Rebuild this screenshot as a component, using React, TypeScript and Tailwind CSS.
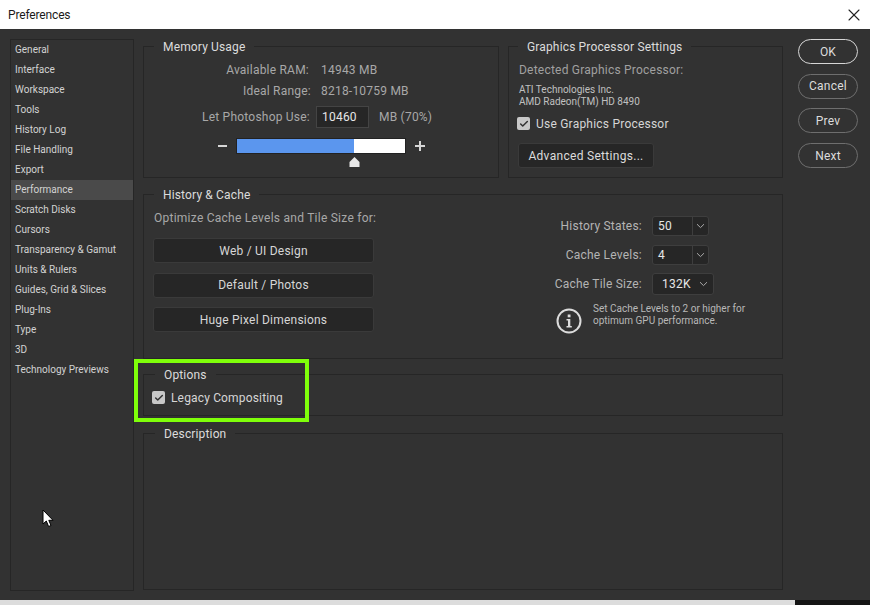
import {Check, X} from "lucide-react";

const navItems = [
    "General", "Interface", "Workspace", "Tools", "History Log", "File Handling", "Export", "Performance",
    "Scratch Disks", "Cursors", "Transparency & Gamut", "Units & Rulers", "Guides, Grid & Slices", "Plug-Ins",
    "Type", "3D", "Technology Previews"
];

function Panel({title, titleClass = "ml-[10px]", className, children}: {title: string; titleClass?: string; className: string; children?: React.ReactNode}) {
    return (
        <section className={`border border-[#262626] ${className}`}>
            <h2 className={`relative -top-[8px] w-fit bg-[#323232] px-[9px] text-[12px] leading-[17px] font-normal tracking-[0.15px] text-[#dcdcdc] ${titleClass}`}>
                {title}
            </h2>
            {children}
        </section>
    );
}

function Checkbox() {
    return (
        <span className="flex size-[13px] items-center justify-center rounded-[2px] bg-[#c8c8c8]">
            <Check className="size-[10px] text-[#323232]" strokeWidth={3.5}/>
        </span>
    );
}

function DarkButton({label}: {label: string}) {
    return (
        <div className="flex h-[25px] w-[221px] items-center justify-center rounded-[3px] border border-[#3a3a3a] bg-[#262626] text-[12px] tracking-[0.22px] text-[#d6d6d6]">
            {label}
        </div>
    );
}

function Chevron() {
    return (
        <svg width="9" height="6" viewBox="0 0 9 6" className="text-[#aaaaaa]">
            <path d="M1 1.2 L4.5 4.6 L8 1.2" fill="none" stroke="currentColor" strokeWidth="1"/>
        </svg>
    );
}

function NumberSelect({label, value}: {label: string; value: string}) {
    return (
        <div className="flex h-[20px] items-center justify-end">
            <span className="mr-[10px] text-[12px] tracking-[0.22px] whitespace-nowrap text-[#b4b4b4]">{label}</span>
            <div className="flex h-[20px] w-[57px] rounded-[3px] border border-[#3e3e3e] bg-[#262626] text-[12px] text-[#e6e6e6]">
                <span className="flex-1 border-r border-[#3e3e3e] pl-[5px] leading-[18px] tracking-[0.22px]">{value}</span>
                <span className="flex w-[15px] items-center justify-center"><Chevron/></span>
            </div>
        </div>
    );
}

function SideButton({label, primary}: {label: string; primary?: boolean}) {
    return (
        <div
            className={`flex h-[25px] w-[60px] items-center justify-center rounded-[13px] border text-[12px] tracking-[0.22px] text-[#dcdcdc] ${
                primary ? "border-[#d6d6d6]" : "border-[#6e6e6e]"
            }`}
        >
            {label}
        </div>
    );
}

export default function App() {
    return (
        <div className="relative flex h-[605px] w-[870px] flex-col overflow-hidden bg-[#323232] font-['Roboto',sans-serif]">
            <header className="flex h-[29px] shrink-0 items-center justify-between bg-white pr-[6px] pl-[8px]">
                <span className="text-[12px] tracking-[-0.15px] text-[#1a1a1a]">Preferences</span>
                <X className="size-[20px] text-[#222222]" strokeWidth={1.3}/>
            </header>

            <div className="flex h-[571px] shrink-0 pt-[10px] pl-[10px]">
                <nav className="h-[552px] w-[124px] border border-[#262626]">
                    {navItems.map((item) => (
                        <div
                            key={item}
                            className={`flex h-[20px] items-center pb-[2px] pl-[4px] text-[10px] text-[#d2d2d2] ${
                                item === "Performance" ? "bg-[#4a4a4a]" : ""
                            }`}
                        >
                            {item}
                        </div>
                    ))}
                </nav>

                <main className="ml-[9px] flex w-[640px] flex-col pt-[7px]">
                    <div className="flex h-[132px] justify-between">
                        <Panel title="Memory Usage" className="w-[356px]">
                            <div className="-mt-[5px] text-[12px] tracking-[0.22px] text-[#a8a8a8]">
                                <div className="flex h-[21px] items-center">
                                    <span className="w-[165px] text-right">Available RAM:</span>
                                    <span className="ml-[12px]">14943 MB</span>
                                </div>
                                <div className="flex h-[21px] items-center">
                                    <span className="w-[167px] text-right">Ideal Range:</span>
                                    <span className="ml-[10px]">8218-10759 MB</span>
                                </div>
                                <div className="mt-[5px] flex h-[22px] items-center">
                                    <span className="w-[166px] text-right">Let Photoshop Use:</span>
                                    <span className="ml-[6px] flex h-[22px] w-[53px] items-center border border-[#444444] bg-[#262626] pl-[5px] text-[#e6e6e6]">10460</span>
                                    <span className="ml-[10px]">MB (70%)</span>
                                </div>
                                <div className="mt-[10px] flex h-[16px] items-center">
                                    <span className="mr-[9px] ml-[74px] h-[2px] w-[9px] bg-[#d6d6d6]"/>
                                    <div className="relative flex h-[16px] w-[170px] border border-[#222222] bg-white">
                                        <div className="h-full w-[117px] bg-[#5b96ee]"/>
                                        <svg width="11" height="10" viewBox="0 0 11 10" className="absolute top-[18px] left-[112px] text-[#e8e8e8]">
                                            <path d="M5.5 0 L10.5 5 V10 H0.5 V5 Z" fill="currentColor"/>
                                        </svg>
                                    </div>
                                    <svg width="10" height="10" viewBox="0 0 10 10" className="ml-[9px] text-[#d6d6d6]">
                                        <path d="M0 5 H10 M5 0 V10" stroke="currentColor" strokeWidth="2"/>
                                    </svg>
                                </div>
                            </div>
                        </Panel>
                        <Panel title="Graphics Processor Settings" titleClass="ml-[9px]" className="w-[275px]">
                            <div className="-mt-[5px] pl-[10px]">
                                <div className="flex h-[21px] items-center text-[12px] tracking-[0.22px] text-[#a0a0a0]">Detected Graphics Processor:</div>
                                <div className="mt-[4px] text-[10px] leading-[12px] text-[#c0c0c0]">
                                    <div>ATI Technologies Inc.</div>
                                    <div>AMD Radeon(TM) HD 8490</div>
                                </div>
                                <div className="mt-[7px] -ml-[2px] flex h-[17px] items-center gap-[6px] text-[12px] tracking-[0.22px] text-[#d6d6d6]">
                                    <Checkbox/>
                                    Use Graphics Processor
                                </div>
                                <div className="mt-[11px] -ml-px flex h-[25px] w-[136px] items-center justify-center rounded-[3px] border border-[#3a3a3a] bg-[#262626] text-[12px] tracking-[0.3px] text-[#dcdcdc]">
                                    Advanced Settings...
                                </div>
                            </div>
                        </Panel>
                    </div>

                    <Panel title="History & Cache" className="mt-[16px] h-[165px]">
                        <div className="-mt-[5px] flex">
                            <div className="w-[231px] pl-[9px]">
                                <div className="flex h-[21px] items-center pl-px text-[12px] tracking-[0.25px] whitespace-nowrap text-[#a8a8a8]">Optimize Cache Levels and Tile Size for:</div>
                                <div className="mt-[10px] flex flex-col gap-[9.5px]">
                                    <DarkButton label="Web / UI Design"/>
                                    <DarkButton label="Default / Photos"/>
                                    <DarkButton label="Huge Pixel Dimensions"/>
                                </div>
                            </div>
                            <div className="ml-[160px] flex w-[228px] flex-col pt-[9px]">
                                <div className="flex w-[174px] flex-col gap-[9px]">
                                    <NumberSelect label="History States:" value="50"/>
                                    <NumberSelect label="Cache Levels:" value="4"/>
                                </div>
                                <div className="mt-[8px] flex h-[22px] w-[179px] items-center justify-end">
                                    <span className="mr-[10px] text-[12px] tracking-[0.22px] whitespace-nowrap text-[#b4b4b4]">Cache Tile Size:</span>
                                    <div className="flex h-[22px] w-[62px] items-center justify-between rounded-[3px] border border-[#3e3e3e] bg-[#262626] pr-[5px] pl-[9px] text-[12px] tracking-[0.22px] text-[#e6e6e6]">
                                        132K
                                        <Chevron/>
                                    </div>
                                </div>
                                <div className="mt-[8px] flex pl-[21px]">
                                    <svg width="26" height="26" viewBox="0 0 26 26" className="mt-[5px] shrink-0 text-[#dcdcdc]">
                                        <circle cx="13" cy="13" r="11.5" fill="none" stroke="currentColor" strokeWidth="2"/>
                                        <rect x="11.7" y="6.5" width="2.8" height="2.8" fill="currentColor"/>
                                        <path d="M10.5 11 H14.3 V18 H15.8 V19.5 H10.5 V18 H12 V12.5 H10.5 Z" fill="currentColor"/>
                                    </svg>
                                    <p className="ml-[11px] text-[10px] leading-[12px] whitespace-nowrap text-[#b8b8b8]">
                                        Set Cache Levels to 2 or higher for<br/>optimum GPU performance.
                                    </p>
                                </div>
                            </div>
                        </div>
                    </Panel>

                    <Panel title="Options" titleClass="ml-[11px]" className="mt-[15px] h-[42px]">
                        <div className="-mt-[3px] flex h-[17px] items-center gap-[6px] pl-[8px] text-[12px] tracking-[0.16px] text-[#d6d6d6]">
                            <Checkbox/>
                            Legacy Compositing
                        </div>
                    </Panel>

                    <Panel title="Description" titleClass="ml-[11px]" className="mt-[17px] h-[157px]"/>
                </main>

                <aside className="ml-[15px] flex flex-col gap-[9.7px]">
                    <SideButton label="OK" primary/>
                    <SideButton label="Cancel"/>
                    <SideButton label="Prev"/>
                    <SideButton label="Next"/>
                </aside>
            </div>

            <footer className="flex h-[5px] shrink-0">
                <div className="w-[795px] bg-[#dcdcdc]"/>
                <div className="flex-1 bg-[#141414]"/>
            </footer>

            {/* annotation box drawn over the dialog */}
            <div className="absolute top-[359px] left-[134px] h-[63px] w-[175px] border-[4px] border-[#7fff0a]"/>

            <svg width="12" height="19" viewBox="0 0 12 19" className="absolute top-[509px] left-[42px]">
                <path d="M1 1 V15 L4.3 12 L6.6 17.5 L9 16.5 L6.8 11.3 H11 Z" fill="#ffffff" stroke="#000000" strokeWidth="1"/>
            </svg>
        </div>
    );
}
